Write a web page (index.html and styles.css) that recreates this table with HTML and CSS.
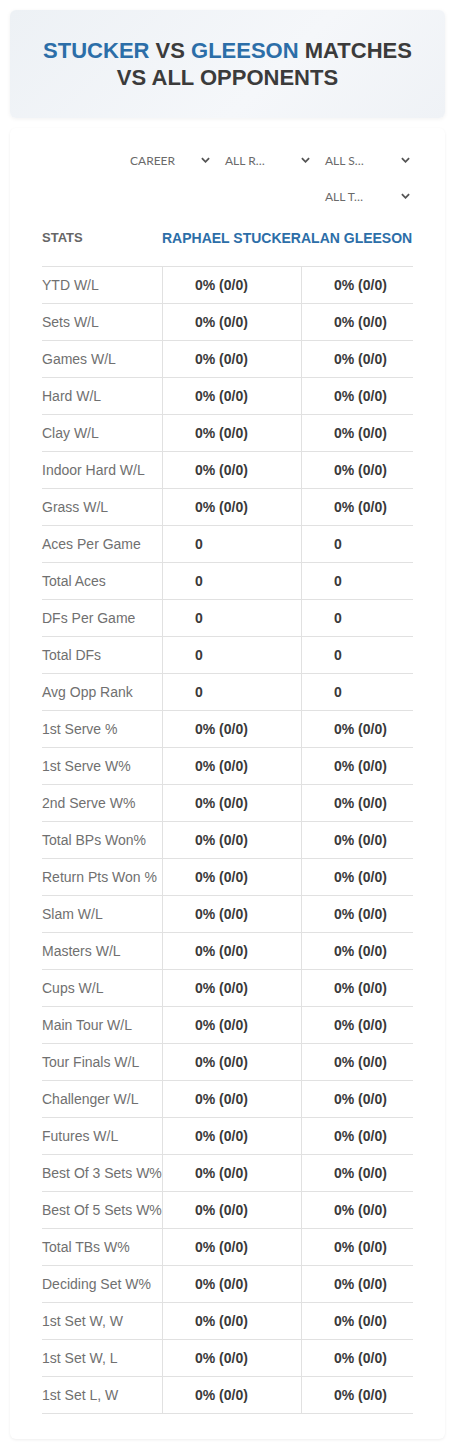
FILE: index.html
```html
<!DOCTYPE html>
<html lang="en">
<head>
  <meta charset="UTF-8">
  <meta name="viewport" content="width=device-width, initial-scale=1">
  <title>Stucker vs Gleeson</title>
  <link rel="stylesheet" href="styles.css">
</head>
<body>
  <div class="page">
    <!-- Title card -->
    <header class="title-card">
      <h1><span class="player">Stucker</span> vs <span class="player">Gleeson</span> Matches vs All Opponents</h1>
    </header>

    <main class="stats-card">
      <!-- Filters -->
      <div class="filters">
        <div class="select"><span class="select-text">CAREER</span><svg class="chevron" viewBox="0 0 10 6"><polyline points="1,1 5,5 9,1"/></svg></div>
        <div class="select"><span class="select-text">ALL R…</span><svg class="chevron" viewBox="0 0 10 6"><polyline points="1,1 5,5 9,1"/></svg></div>
        <div class="select"><span class="select-text">ALL S…</span><svg class="chevron" viewBox="0 0 10 6"><polyline points="1,1 5,5 9,1"/></svg></div>
        <div class="select"><span class="select-text">ALL T…</span><svg class="chevron" viewBox="0 0 10 6"><polyline points="1,1 5,5 9,1"/></svg></div>
      </div>

      <div class="stats-head">
        <div class="head-label">STATS</div>
        <div class="head-names">RAPHAEL STUCKERALAN GLEESON</div>
      </div>

      <div class="stats-table" id="stats-table"></div>
    </main>
  </div>

  <script>
    // Rows of the comparison table
    var rows = [
      ["YTD W/L", "0% (0/0)"],
      ["Sets W/L", "0% (0/0)"],
      ["Games W/L", "0% (0/0)"],
      ["Hard W/L", "0% (0/0)"],
      ["Clay W/L", "0% (0/0)"],
      ["Indoor Hard W/L", "0% (0/0)"],
      ["Grass W/L", "0% (0/0)"],
      ["Aces Per Game", "0"],
      ["Total Aces", "0"],
      ["DFs Per Game", "0"],
      ["Total DFs", "0"],
      ["Avg Opp Rank", "0"],
      ["1st Serve %", "0% (0/0)"],
      ["1st Serve W%", "0% (0/0)"],
      ["2nd Serve W%", "0% (0/0)"],
      ["Total BPs Won%", "0% (0/0)"],
      ["Return Pts Won %", "0% (0/0)"],
      ["Slam W/L", "0% (0/0)"],
      ["Masters W/L", "0% (0/0)"],
      ["Cups W/L", "0% (0/0)"],
      ["Main Tour W/L", "0% (0/0)"],
      ["Tour Finals W/L", "0% (0/0)"],
      ["Challenger W/L", "0% (0/0)"],
      ["Futures W/L", "0% (0/0)"],
      ["Best Of 3 Sets W%", "0% (0/0)"],
      ["Best Of 5 Sets W%", "0% (0/0)"],
      ["Total TBs W%", "0% (0/0)"],
      ["Deciding Set W%", "0% (0/0)"],
      ["1st Set W, W", "0% (0/0)"],
      ["1st Set W, L", "0% (0/0)"],
      ["1st Set L, W", "0% (0/0)"]
    ];

    var table = document.getElementById("stats-table");
    rows.forEach(function(r) {
      var row = document.createElement("div");
      row.className = "stats-row";
      row.innerHTML =
        '<div class="cell label">' + r[0] + '</div>' +
        '<div class="cell value">' + r[1] + '</div>' +
        '<div class="cell value">' + r[1] + '</div>';
      table.appendChild(row);
    });
  </script>
</body>
</html>
```

FILE: styles.css
```css
/* Global Styles */
* {
  margin: 0;
  padding: 0;
  box-sizing: border-box;
}
body {
  font-family: "Liberation Sans", Arial, sans-serif;
  background: #fff;
  color: #333;
}
.page {
  padding: 10px;
  display: flex;
  flex-direction: column;
  gap: 10px;
}
/* Title card */
.title-card {
  background: linear-gradient(135deg, #edf1f5, #f5f7fa 60%, #eff2f6);
  border-radius: 6px;
  box-shadow: 0 1px 4px rgba(0, 0, 0, 0.06);
  padding: 27px 30px;
  text-align: center;
}
.title-card h1 {
  font-size: 22px;
  line-height: 27px;
  font-weight: bold;
  text-transform: uppercase;
  color: #3b3b3b;
}
.player {
  color: #2c6ea8;
}
/* Stats card */
.stats-card {
  background: #fff;
  border-radius: 6px;
  box-shadow: 0 1px 3px rgba(0, 0, 0, 0.07);
  padding: 18px 32px 25px;
}
/* Filters */
.filters {
  display: flex;
  flex-wrap: wrap;
  justify-content: flex-end;
  row-gap: 8px;
  column-gap: 4px;
}
.select {
  width: 96px;
  height: 28px;
  padding: 0 3px 0 8px;
  display: flex;
  align-items: center;
  font-family: Lato, "Open Sans", sans-serif;
  font-size: 12px;
  color: #6a6a6a;
}
.filters .select:first-child {
  width: 91px;
}
.select-text {
  white-space: nowrap;
}
.chevron {
  width: 9px;
  height: 6px;
  margin-left: auto;
  fill: none;
  stroke: #555;
  stroke-width: 2;
}
/* Table head */
.stats-head {
  display: flex;
  padding: 18px 0;
  line-height: 20px;
  font-weight: bold;
}
.head-label {
  width: 120px;
  font-size: 13px;
  color: #666;
}
.head-names {
  font-size: 14px;
  color: #2c6ea8;
  white-space: nowrap;
}
/* Table */
.stats-table {
  border-top: 1px solid #e1e1e1;
}
.stats-row {
  display: grid;
  grid-template-columns: 120px 139px 1fr;
  height: 37px;
  border-bottom: 1px solid #e1e1e1;
  font-size: 14px;
}
.cell {
  display: flex;
  align-items: center;
  white-space: nowrap;
}
.label {
  color: #707070;
}
.value {
  border-left: 1px solid #e1e1e1;
  padding-left: 32px;
  font-weight: bold;
  color: #3a3a3a;
}
```
